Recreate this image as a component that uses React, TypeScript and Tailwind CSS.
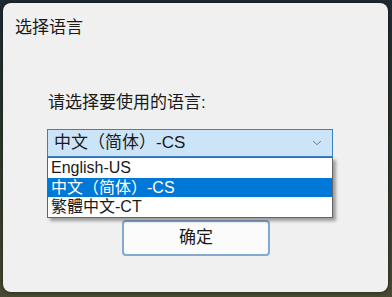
import { ChevronDown } from 'lucide-react';

const font = { fontFamily: '"Liberation Sans", "Noto Sans CJK SC", sans-serif' };

const options = [
  { code: 'en', label: 'English-US' },
  { code: 'cs', label: '中文（简体）-CS' },
  { code: 'ct', label: '繁體中文-CT' },
];

export default function App() {
  const selected = 'cs';

  return (
    <div className="w-[392px] h-[297px] overflow-hidden bg-gradient-to-b from-[#1f2b33] via-[#2f3a2c] to-[#4a4a30] p-[3px]">
      <div
        className="relative w-[385px] h-[289px] rounded-[8px] bg-[#f0f0f0] text-[#1a1a1a] shadow-[0_0_4px_rgba(0,0,0,0.6)]"
        style={font}
      >
        <div className="pl-[12px] pt-[13px] text-[17px] leading-[24px]">选择语言</div>

        <div className="pl-[45px] pt-[52px] text-[17px] leading-[22px]">请选择要使用的语言:</div>

        <div className="relative ml-[44px] mt-[15px] w-[286px]">
          <div className="flex h-[28px] items-center justify-between border border-[#3f7fc0] bg-[#cce4f7] pl-[6px] pr-[8px]">
            <span className="text-[17px] leading-[22px]">中文（简体）-CS</span>
            <ChevronDown size={14} strokeWidth={1.5} className="text-[#606060]" />
          </div>

          <div className="absolute left-0 top-[28px] z-10 w-[286px] border border-[#646464] bg-white shadow-[3px_3px_3px_rgba(0,0,0,0.35)]">
            {options.map((o) => (
              <div
                key={o.code}
                className={`h-[19.5px] pl-[3px] text-[16px] leading-[19px] ${
                  o.code === selected ? 'bg-[#0078d7] text-white' : 'text-[#1a1a1a]'
                }`}
              >
                {o.label}
              </div>
            ))}
          </div>
        </div>

        <button
          type="button"
          className="ml-[119px] mt-[63px] flex h-[36px] w-[148px] items-center justify-center rounded-[4px] border-2 border-[#82a9cf] bg-[#fbfbfb] text-[17px]"
        >
          确定
        </button>
      </div>
    </div>
  );
}
